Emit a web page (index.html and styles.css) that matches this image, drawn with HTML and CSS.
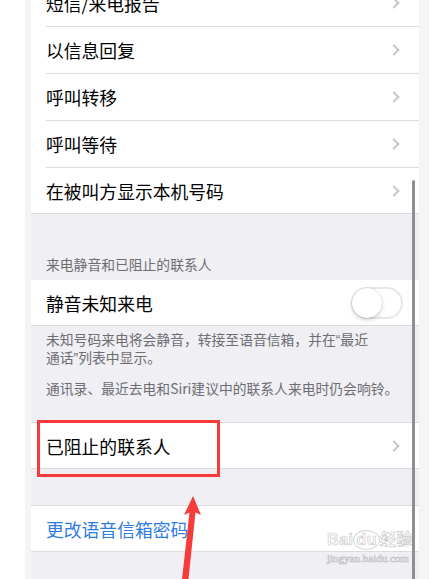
FILE: index.html
```html
<!DOCTYPE html>
<html lang="zh-CN">
<head>
    <meta charset="UTF-8">
    <meta name="viewport" content="width=device-width, initial-scale=1.0">
    <title>电话</title>
    <link rel="stylesheet" href="styles.css">
</head>
<body>
    <div class="frame">
        <div class="screen">
            <div class="scrollbar"></div>

            <!-- Phone options -->
            <div class="group">
                <div class="cell"><div class="cell-inner"><span>短信/来电报告</span><span class="chevron"></span></div></div>
                <div class="cell"><div class="cell-inner"><span>以信息回复</span><span class="chevron"></span></div></div>
                <div class="cell"><div class="cell-inner"><span>呼叫转移</span><span class="chevron"></span></div></div>
                <div class="cell"><div class="cell-inner"><span>呼叫等待</span><span class="chevron"></span></div></div>
                <div class="cell"><div class="cell-inner last"><span>在被叫方显示本机号码</span><span class="chevron"></span></div></div>
            </div>

            <!-- Silence & blocked -->
            <h3 class="section-header">来电静音和已阻止的联系人</h3>
            <div class="group">
                <div class="cell"><div class="cell-inner last"><span>静音未知来电</span><span class="toggle"></span></div></div>
            </div>
            <div class="section-footer">
                <p>未知号码来电将会静音，转接至语音信箱，并在<span class="quote">“</span>最近<br>通话<span class="quote">”</span>列表中显示。</p>
                <p>通讯录、最近去电和Siri建议中的联系人来电时仍会响铃。</p>
            </div>

            <div class="group bordered">
                <div class="cell highlighted"><div class="cell-inner last"><span>已阻止的联系人</span><span class="chevron"></span></div></div>
            </div>

            <div class="group bordered spaced">
                <div class="cell"><div class="cell-inner last"><span class="link">更改语音信箱密码</span></div></div>
            </div>
        </div>

        <div class="watermark">
            <div class="brand">Bai<span class="paw">du</span>经验</div>
            <div class="site">jingyan.baidu.com</div>
        </div>
    </div>

    <svg class="arrow" width="443" height="579" viewBox="0 0 443 579">
        <polygon points="193,496 201,515 195.5,512.5 188.5,579 182,579 189.5,512.5 184,515" fill="#f63b3b"/>
    </svg>
</body>
</html>
```

FILE: styles.css
```css
* {
    box-sizing: border-box;
    margin: 0;
    padding: 0;
}

body {
    background: #ffffff;
    font-family: "Noto Sans CJK SC", "Noto Sans", sans-serif;
    height: 100vh;
    overflow: hidden;
    position: relative;
}

.frame {
    margin-left: 25px;
    width: 404px;
    height: 100vh;
    background: #f4f4f5;
    padding-left: 6px;
    padding-right: 10px;
    position: relative;
    overflow: hidden;
}

.screen {
    background: #efeff4;
    height: 620px;
    margin-top: -20px;
    position: relative;
}

.scrollbar {
    position: absolute;
    right: 4px;
    top: 200px;
    width: 3px;
    height: 420px;
    border-radius: 2px;
    background: #8e8e93;
    z-index: 2;
}

.group {
    background: #ffffff;
    border-bottom: 1px solid #dcdce0;
}

.group.bordered {
    border-top: 1px solid #dcdce0;
}

.group.spaced {
    margin-top: 36px;
}

.cell {
    padding-left: 15px;
    position: relative;
}

.cell-inner {
    height: 47px;
    border-bottom: 1px solid #dcdce0;
    display: flex;
    align-items: center;
    justify-content: space-between;
    padding-right: 19px;
    font-size: 17.8px;
    color: #000000;
}

.cell-inner.last {
    height: 45px;
    border-bottom: none;
}

.chevron {
    width: 8px;
    height: 8px;
    border-top: 2px solid #c7c7cc;
    border-right: 2px solid #c7c7cc;
    transform: rotate(45deg);
    margin-right: 2px;
}

.toggle {
    width: 52px;
    height: 32px;
    border-radius: 16px;
    background: #ffffff;
    border: 2px solid #e7e7ea;
    position: relative;
    margin-right: -3px;
}

.toggle::after {
    content: "";
    position: absolute;
    left: -1px;
    top: -1px;
    width: 30px;
    height: 30px;
    border-radius: 50%;
    background: #ffffff;
    box-shadow: 0 2px 4px rgba(0, 0, 0, 0.18), 0 0 1px rgba(0, 0, 0, 0.2);
}

.section-header {
    font-size: 13.8px;
    font-weight: normal;
    color: #6d6d72;
    line-height: 18px;
    padding: 41px 15px 7px;
}

.section-footer {
    font-size: 13.8px;
    color: #6d6d72;
    line-height: 17px;
    padding: 5px 15px 25px;
}

.section-footer p + p {
    margin-top: 13px;
}

.quote {
    font-family: "Liberation Sans", sans-serif;
}

.link {
    color: #2f7be6;
}

.highlighted::after {
    content: "";
    position: absolute;
    left: 6px;
    top: -3px;
    width: 177px;
    height: 51px;
    border: 3px solid #f93a3a;
}

.watermark {
    position: absolute;
    left: 302px;
    top: 526px;
    color: rgba(255, 255, 255, 0.75);
    -webkit-text-stroke: 0.7px rgba(150, 150, 150, 0.55);
    font-family: "Liberation Sans", "Noto Sans CJK SC", sans-serif;
    z-index: 3;
}

.brand {
    font-size: 16px;
    font-weight: bold;
    letter-spacing: 0.5px;
}

.paw {
    display: inline-block;
    border: 1px solid rgba(150, 150, 150, 0.4);
    border-radius: 50%;
    padding: 0 2px;
}

.site {
    font-family: "Liberation Serif", serif;
    font-size: 11px;
    margin-top: 2px;
}

.arrow {
    position: absolute;
    left: 0;
    top: 0;
    z-index: 4;
}
```
